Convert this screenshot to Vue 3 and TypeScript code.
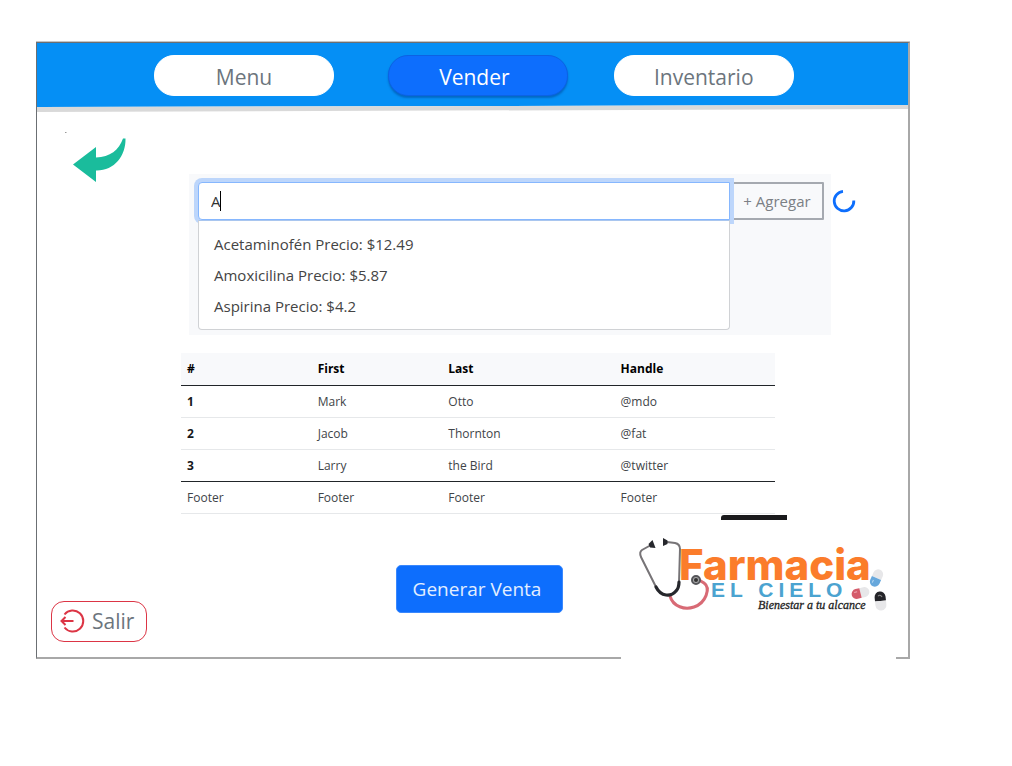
<script setup lang="ts">
import { ref } from 'vue'

interface Product {
  name: string
  price: string
}

interface Row {
  id: number
  first: string
  last: string
  handle: string
}

const tabs = ['Menu', 'Vender', 'Inventario']
const activeTab = ref('Vender')
const query = ref('A')

const products: Product[] = [
  { name: 'Acetaminofén', price: '12.49' },
  { name: 'Amoxicilina', price: '5.87' },
  { name: 'Aspirina', price: '4.2' },
]

const rows: Row[] = [
  { id: 1, first: 'Mark', last: 'Otto', handle: '@mdo' },
  { id: 2, first: 'Jacob', last: 'Thornton', handle: '@fat' },
  { id: 3, first: 'Larry', last: 'the Bird', handle: '@twitter' },
]
</script>

<template>
  <div class="window">
    <header>
      <nav class="tabs">
        <button
          v-for="tab in tabs"
          :key="tab"
          type="button"
          class="tab"
          :class="{ active: tab === activeTab }"
          @click="activeTab = tab"
        >
          {{ tab }}
        </button>
      </nav>
      <svg class="edge" viewBox="0 0 872 8" preserveAspectRatio="none" aria-hidden="true">
        <path d="M0 0H872V1L0 3Z" fill="#058ff5" />
        <path d="M0 3L872 1V5L0 8Z" fill="#d9d9d9" />
      </svg>
    </header>

    <main>
      <div class="workspace">
        <a class="back" href="#" aria-label="Volver">
          <svg width="64" height="54" viewBox="0 0 64 54" aria-hidden="true">
            <path d="M0 4.500h1.500" stroke="#999" stroke-width="1" />
            <path
              d="M8 36.500L31 19V29.500C45 29 54 22 58 10.500H60.500C61 28 49 43 31 42.500V54Z"
              fill="#1abc9c"
            />
          </svg>
        </a>

        <div class="content">
          <section class="search">
            <div class="combo">
              <div class="field">
                <input v-model="query" type="text" aria-label="Buscar producto" />
                <span class="caret"></span>
              </div>
              <ul class="options">
                <li v-for="p in products" :key="p.name">{{ p.name }} Precio: ${{ p.price }}</li>
              </ul>
            </div>
            <button type="button" class="add">+ Agregar</button>
            <svg class="spinner" width="24" height="24" viewBox="0 0 24 24" role="status">
              <path
                d="M11 2.300A9.800 9.800 0 1 0 21.800 11.500"
                fill="none"
                stroke="#0d6efd"
                stroke-width="2.800"
              />
            </svg>
          </section>

          <table>
            <colgroup>
              <col class="c1" />
              <col class="c1" />
              <col class="c2" />
              <col />
            </colgroup>
            <thead>
              <tr>
                <th scope="col">#</th>
                <th scope="col">First</th>
                <th scope="col">Last</th>
                <th scope="col">Handle</th>
              </tr>
            </thead>
            <tbody>
              <tr v-for="r in rows" :key="r.id">
                <th scope="row">{{ r.id }}</th>
                <td>{{ r.first }}</td>
                <td>{{ r.last }}</td>
                <td>{{ r.handle }}</td>
              </tr>
            </tbody>
            <tfoot>
              <tr>
                <td v-for="n in 4" :key="n">Footer</td>
              </tr>
            </tfoot>
          </table>
        </div>
      </div>

      <footer>
        <button type="button" class="exit">
          <svg width="26" height="26" viewBox="0 0 26 26" fill="none" stroke="#dc3545" stroke-width="2" aria-hidden="true">
            <path d="M5.500 6.500A10.500 10.500 0 1 1 5.500 19.500" />
            <path d="M2.500 13H14.500M6.500 9L2.500 13L6.500 17" />
          </svg>
          Salir
        </button>
        <button type="button" class="sell">Generar Venta</button>
        <div class="brand">
          <svg width="275" height="144" viewBox="621 515 275 144" role="img" aria-label="Farmacia El Cielo">
            <path d="M721 520V518Q721 515 724 515H787V520Z" fill="#1a1a1c" />
            <!-- stethoscope -->
            <g fill="none" stroke-linecap="round">
              <path d="M651 545L642 550Q639 552 641 557L656 587" stroke="#777477" stroke-width="2" />
              <path d="M667 542L675 543Q680 544 680 549L679 583" stroke="#777477" stroke-width="2" />
              <path d="M670 596C673 607 685 610 694 607C706 603 711 588 704 583L699 580" stroke="#d86a75" stroke-width="3" />
              <path d="M656 587C661 597 671 597 676 591Q679 588 679 582" stroke="#26272c" stroke-width="3.200" />
            </g>
            <path d="M648.500 544L652.500 540L655.500 548L650 547.500Z M663 538L667.500 540.500V544L663 546Z" fill="#26272c" />
            <text class="name" x="679" y="580">Farmacia</text>
            <circle cx="696" cy="580" r="4" fill="#aaa" stroke="#55565a" stroke-width="2" />
            <circle cx="696" cy="580" r="2" fill="#333" />
            <text class="sub" x="711" y="597">EL CIELO</text>
            <text class="tagline" x="758" y="609">Bienestar a tu alcance</text>
            <!-- capsules -->
            <g transform="translate(876.500 578) rotate(24)">
              <path d="M-5 0V-4A5 5 0 0 1 5 -4V0Z" fill="#e7e7e9" />
              <path d="M-5 0V4A5 5 0 0 0 5 4V0Z" fill="#67a8dc" />
              <path d="M-2 3V6" stroke="#b8d8f2" />
            </g>
            <g transform="translate(860.500 593) rotate(76)">
              <path d="M-5 0V-4A5 5 0 0 1 5 -4V0Z" fill="#e7e7e9" />
              <path d="M-5 0V4A5 5 0 0 0 5 4V0Z" fill="#d45c6b" />
              <path d="M-2 3V6" stroke="#f0aab3" />
            </g>
            <g transform="translate(880.500 601) rotate(-6)">
              <path d="M-5.500 0V-4A5.500 5.500 0 0 1 5.500 -4V0Z" fill="#242429" />
              <path d="M-5.500 0V4A5.500 5.500 0 0 0 5.500 4V0Z" fill="#e7e7e9" />
              <path d="M-2 -5Q0 -7 2 -4" fill="none" stroke="#888" />
            </g>
          </svg>
        </div>
      </footer>
    </main>
  </div>
</template>

<style>
body {
  margin: 0;
  background: #fff;
}
</style>

<style scoped>
.window {
  box-sizing: border-box;
  margin: 42px 102px 0 36px;
  border: 1px solid #6b6f73;
  border-right: 2px solid #a8a8a8;
  border-bottom: 2px solid #a8a8a8;
  box-shadow: 0 -1px 0 #c4c4c4;
  font-family: 'Segoe UI', 'Open Sans', 'Noto Sans', sans-serif;
  color: #212529;
}
button {
  font-family: inherit;
  cursor: pointer;
}
.tabs {
  display: grid;
  grid-template-columns: 235fr 226fr 295fr;
  padding: 12px 0 8px 117px;
  background: #058ff5;
}
.tab {
  width: 180px;
  height: 41px;
  padding: 2px 0 0;
  border: 1px solid #fff;
  border-radius: 20px;
  background: #fff;
  color: #6c757d;
  font-size: 21px;
  line-height: 28px;
}
.tab.active {
  padding-right: 8px;
  border-color: #0c62e4;
  background: #0d6efd;
  box-shadow: 0 2px 2px rgba(0, 60, 140, 0.45);
  color: #fff;
}
.edge {
  display: block;
  width: 100%;
  height: 8px;
}
.workspace {
  display: flex;
}
.back {
  flex: none;
  width: 116px;
  padding: 16px 0 0 28px;
}
.back svg {
  display: block;
}
.content {
  flex: 1;
  min-width: 0;
  padding-top: 62px;
}
.search {
  display: flex;
  align-items: flex-start;
  box-sizing: border-box;
  height: 161px;
  margin: 0 77px 0 8px;
  padding: 8px 7px 0 9px;
  background: #f8f9fb;
}
.combo {
  position: relative;
  z-index: 1;
  flex: 1;
}
.field {
  position: relative;
}
.field input {
  display: block;
  box-sizing: border-box;
  width: 100%;
  height: 38px;
  padding: 0 12px;
  border: 1px solid #86b7fe;
  border-radius: 4px 0 0 4px;
  outline: 0;
  box-shadow: 0 0 0 4px #bdd6fb;
  background: #fff;
  color: #333;
  font: inherit;
  font-size: 15px;
}
.caret {
  position: absolute;
  left: 22px;
  top: 9px;
  width: 1px;
  height: 20px;
  background: #000;
}
.options {
  position: relative;
  box-sizing: border-box;
  margin: 0;
  padding: 8px 0 7px;
  border: 1px solid #d0d2d5;
  border-top-color: #a9c6ef;
  border-radius: 0 0 4px 4px;
  background: #fff;
  list-style: none;
}
.options li {
  padding: 0 15px;
  color: #444;
  font-size: 15px;
  line-height: 31px;
}
.add {
  flex: none;
  width: 94px;
  height: 38px;
  padding: 0;
  border: 2px solid #a5a9b0;
  border-radius: 1px;
  background: transparent;
  color: #7b8085;
  font-size: 15px;
}
.spinner {
  flex: none;
  margin: 7px -32px 0 8px;
}
table {
  width: calc(100% - 133px);
  margin-top: 18px;
  border-collapse: collapse;
  table-layout: fixed;
  font-size: 12px;
  line-height: 16px;
}
.c1 {
  width: 22%;
}
.c2 {
  width: 29%;
}
th,
td {
  box-sizing: border-box;
  height: 32px;
  padding: 8px 6px 7px;
  border-bottom: 1px solid #e6e8ea;
  text-align: left;
  color: #404448;
}
th {
  color: #16191c;
}
thead th {
  background: #f8f9fb;
  color: #000;
}
thead th,
tbody tr:last-child > * {
  border-bottom-color: #212529;
}
footer {
  display: flex;
  align-items: flex-start;
  justify-content: space-between;
  padding: 1px 12px 0 14px;
}
.exit {
  display: flex;
  align-items: center;
  gap: 7px;
  flex: none;
  height: 41px;
  width: 96px;
  margin-top: 86px;
  padding: 0 7px;
  border: 1px solid #dc3545;
  border-radius: 13px;
  background: #fff;
  color: #6c757d;
  font-size: 21px;
}
.exit svg {
  flex: none;
}
.sell {
  width: 167px;
  height: 48px;
  margin: 50px 0 0 190px;
  padding: 0 4px 0 0;
  border: 1px solid #3a88fd;
  border-radius: 5px;
  background: #0d6efd;
  color: #e3eeff;
  font-size: 19px;
}
.brand {
  position: relative;
  flex: none;
  margin-bottom: -2px;
  background: #fff;
}
.brand svg {
  display: block;
}
.name {
  fill: #fb7c2b;
  font: 800 42px Inter, sans-serif;
}
.sub {
  fill: #4ba3d0;
  font: 700 21px 'Liberation Sans', sans-serif;
  letter-spacing: 5px;
}
.tagline {
  fill: #222;
  stroke: #222;
  stroke-width: 0.3px;
  font: italic 400 12px 'Liberation Serif', serif;
}
</style>
